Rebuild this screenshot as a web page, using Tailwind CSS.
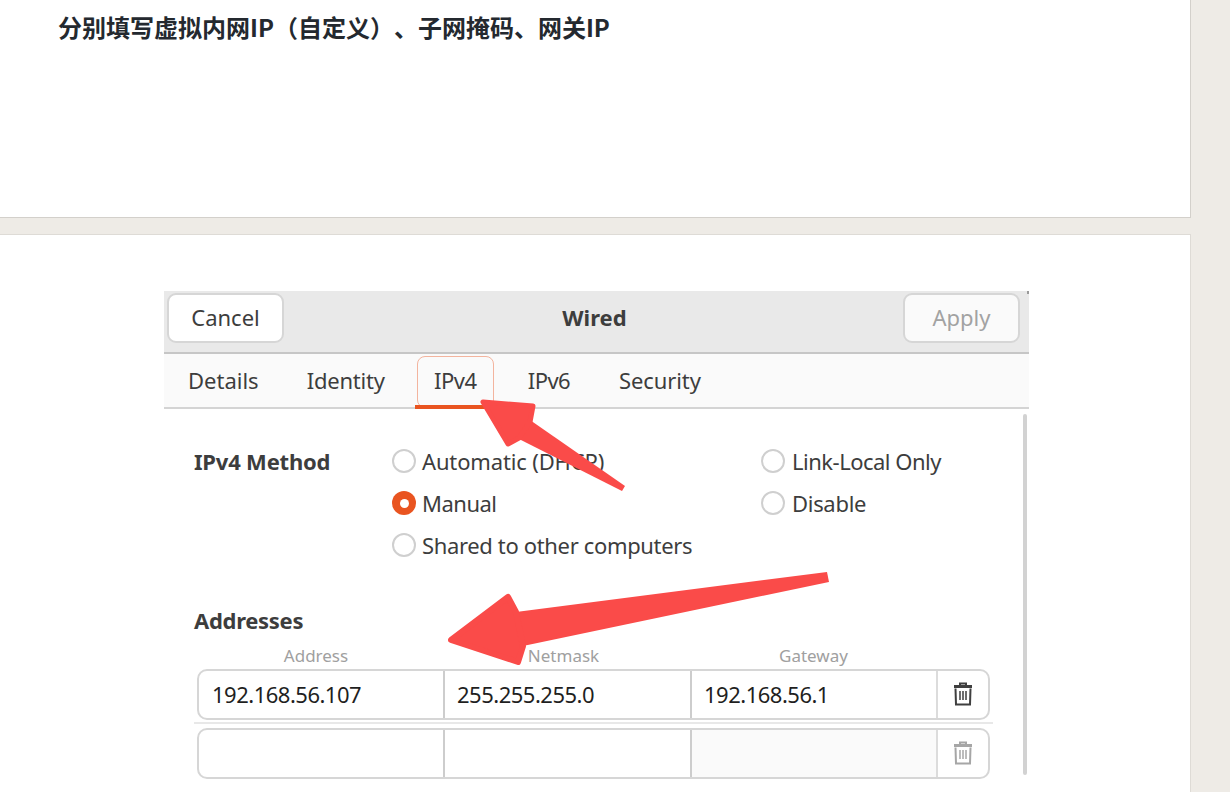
<!DOCTYPE html>
<html lang="en">
<head>
    <meta charset="UTF-8">
    <meta name="viewport" content="width=device-width, initial-scale=1.0">
    <title>Wired IPv4</title>
    <script src="https://cdn.jsdelivr.net/npm/@tailwindcss/browser@4"></script>
</head>
<body class="bg-[#eeebe6] h-[792px] overflow-hidden font-['Noto_Sans','Noto_Sans_CJK_SC',sans-serif]">

    <!-- Text card -->
    <section class="w-[1191px] h-[218px] bg-white border-r border-b border-[#d3d0cb] pl-[58px] pt-[9px]">
        <p class="text-[24px] leading-[36px] font-bold text-[#24292f] font-['Noto_Sans_CJK_SC','Noto_Sans',sans-serif] [text-spacing-trim:space-all]">分别填写虚拟内网IP（自定义）、子网掩码、网关IP</p>
    </section>

    <!-- Picture card -->
    <section class="w-[1191px] h-[558px] mt-[16px] bg-white border-r border-t border-[#dedbd6] pl-[164px] pt-[56px]">
        <div class="relative w-[865px] text-[#3d3d3d] text-[22px] leading-[30px]">

            <!-- Header bar -->
            <div class="h-[63px] bg-[#e9e9e9] border-b-2 border-[#c6c6c6] pl-[3px] pr-[9px] pt-[2px] flex justify-between">
                <button class="w-[117px] h-[50px] pb-[3px] bg-white border-2 border-[#d6d6d6] rounded-[9px]">Cancel</button>
                <span class="font-bold pt-[9px] pl-[2px]">Wired</span>
                <button class="w-[117px] h-[50px] pb-[3px] bg-[#fafafa] border-2 border-[#d6d6d6] rounded-[9px] text-[#a2a2a2]">Apply</button>
            </div>

            <!-- Tabs -->
            <div class="h-[55px] bg-[#fafafa] border-b-2 border-[#d4d4d4] flex items-start">
                <span class="ml-[24px] mt-[11px]">Details</span>
                <span class="ml-[48px] mt-[11px] tracking-[-0.2px]">Identity</span>
                <div class="relative ml-[32px] mt-[2px] w-[77px] h-[52px] border border-[#f3b49e] rounded-[8px] flex justify-center pt-[8px] tracking-[-0.5px]">
                    IPv4
                    <div class="absolute left-[-3px] right-[-1px] bottom-[-2px] h-[4px] bg-[#e95420]"></div>
                </div>
                <span class="ml-[34px] mt-[11px] tracking-[-0.6px]">IPv6</span>
                <span class="ml-[49px] mt-[11px] tracking-[-0.1px]">Security</span>
            </div>

            <!-- Method -->
            <div class="relative h-[369px] pl-[30px] pt-[37px]">
                <div class="flex items-start">
                    <span class="w-[199px] font-bold tracking-[-0.2px]">IPv4 Method</span>
                    <div class="w-[369px] flex flex-col gap-[12px] tracking-[-0.35px]">
                        <label class="flex items-center gap-[6px] ml-[-1px] tracking-[-0.15px]"><span class="w-[24px] h-[24px] rounded-full border-2 border-[#cfcfcf] bg-white"></span>Automatic (DHCP)</label>
                        <label class="flex items-center gap-[6px] ml-[-1px] tracking-[-0.5px]"><span class="w-[24px] h-[24px] rounded-full bg-[#e95420] flex items-center justify-center"><span class="w-[9px] h-[9px] rounded-full bg-white"></span></span>Manual</label>
                        <label class="flex items-center gap-[6px] ml-[-1px]"><span class="w-[24px] h-[24px] rounded-full border-2 border-[#cfcfcf] bg-white"></span>Shared to other computers</label>
                    </div>
                    <div class="flex flex-col gap-[12px] tracking-[-0.3px]">
                        <label class="flex items-center gap-[7px] ml-[-1px] tracking-[-0.5px]"><span class="w-[24px] h-[24px] rounded-full border-2 border-[#cfcfcf] bg-white"></span>Link-Local Only</label>
                        <label class="flex items-center gap-[7px] ml-[-1px]"><span class="w-[24px] h-[24px] rounded-full border-2 border-[#cfcfcf] bg-white"></span>Disable</label>
                    </div>
                </div>

                <!-- Addresses -->
                <h3 class="font-bold mt-[45px] tracking-[-0.3px]">Addresses</h3>
                <div class="flex ml-[3px] mt-[9px] text-[17px] leading-[24px] text-[#a0a0a0] text-center">
                    <span class="w-[238px]">Address</span>
                    <span class="w-[257px]">Netmask</span>
                    <span class="w-[243px]">Gateway</span>
                </div>
                <div class="flex w-[793px] h-[51px] ml-[3px] mt-[1px] border-2 border-[#d6d6d6] rounded-[10px] text-[#1f1f1f] tracking-[-0.5px]">
                    <span class="w-[246px] pl-[13px] pt-[8px] border-r-2 border-[#cdcdcd]">192.168.56.107</span>
                    <span class="w-[247px] pl-[12px] pt-[8px] border-r-2 border-[#cdcdcd]">255.255.255.0</span>
                    <span class="w-[246px] pl-[12px] pt-[8px] border-r-2 border-[#dcdcdc]">192.168.56.1</span>
                    <span class="flex-1 flex items-center justify-center pb-[2px] pr-[1px]">
                        <svg class="w-[20px] h-[24px]" viewBox="0 0 20 24" fill="none" stroke="#3f3f3f"><path d="M7 3V1.500h6V3" stroke-width="2"/><path d="M1 4.500h18" stroke-width="3"/><path d="M2.500 6.500 3 22.500h14l.5-16" stroke-width="2"/><path d="M7 9v9M10 9v9M13 9v9" stroke-width="1.500"/></svg>
                    </span>
                </div>
                <div class="w-[799px] h-[2px] bg-[#e8e8e8] mt-[2px]"></div>
                <div class="flex w-[793px] h-[51px] ml-[3px] mt-[4px] border-2 border-[#d6d6d6] rounded-[10px]">
                    <span class="w-[246px] border-r-2 border-[#cdcdcd]"></span>
                    <span class="w-[247px] border-r-2 border-[#cdcdcd]"></span>
                    <span class="w-[246px] bg-[#fafafa] border-r-2 border-[#dcdcdc]"></span>
                    <span class="flex-1 flex items-center justify-center pb-[2px] pr-[1px]">
                        <svg class="w-[20px] h-[24px]" viewBox="0 0 20 24" fill="none" stroke="#a6a6a6"><path d="M7 3V1.500h6V3" stroke-width="2"/><path d="M1 4.500h18" stroke-width="3"/><path d="M2.500 6.500 3 22.500h14l.5-16" stroke-width="2"/><path d="M7 9v9M10 9v9M13 9v9" stroke-width="1.500"/></svg>
                    </span>
                </div>

                <!-- Scrollbar -->
                <div class="absolute right-[2px] top-[5px] w-[4px] h-[361px] rounded-full bg-[#d2d2d2]"></div>
            </div>

            <!-- Red arrows drawn on the picture -->
            <svg class="absolute left-0 top-0 w-[865px] h-[501px]" viewBox="0 0 865 501" fill="#fa4b49">
                <path d="M366 129 353 147 458 200 461 195Z"/>
                <path d="M319 111 369 115 366 131 355 147 344 153Z" stroke="#fa4b49" stroke-width="5" stroke-linejoin="round"/>
                <path d="M663 281 352 321 359 355 665 291Z"/>
                <path d="M287 349 344 306 352 321 359 355 354 371Z" stroke="#fa4b49" stroke-width="6" stroke-linejoin="round"/>
            </svg>
            <div class="absolute right-0 top-0 w-[2px] h-[3px] bg-[#9a9a9a]"></div>
        </div>
    </section>

</body>
</html>
